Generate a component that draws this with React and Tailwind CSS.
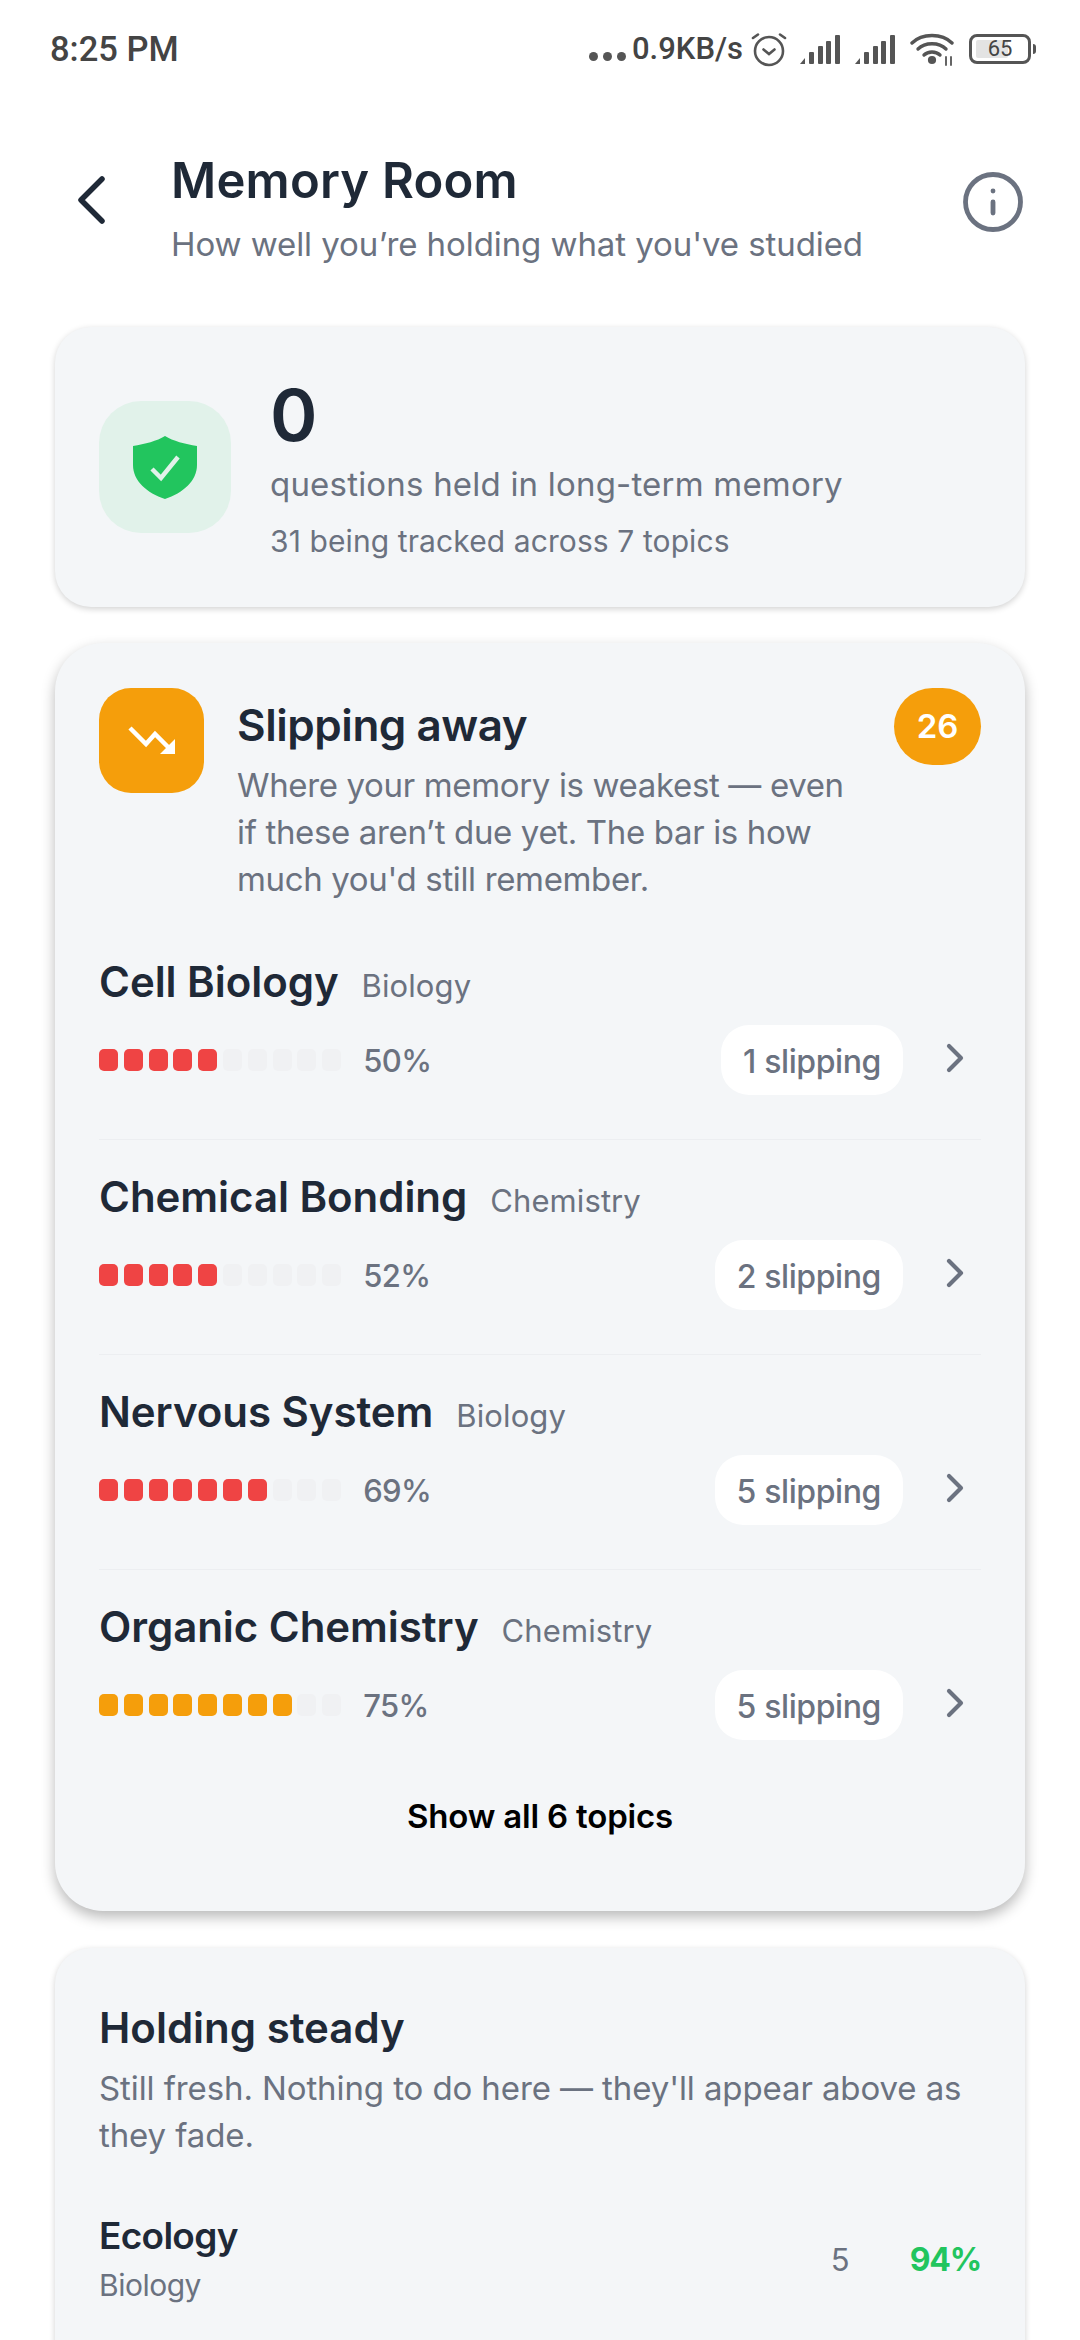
import { Info } from "lucide-react";

const slipping = [
  { title: "Cell Biology", subject: "Biology", pct: 50, filled: 5, color: "bg-[#ef4444]", count: 1 },
  { title: "Chemical Bonding", subject: "Chemistry", pct: 52, filled: 5, color: "bg-[#ef4444]", count: 2 },
  { title: "Nervous System", subject: "Biology", pct: 69, filled: 7, color: "bg-[#ef4444]", count: 5 },
  { title: "Organic Chemistry", subject: "Chemistry", pct: 75, filled: 8, color: "bg-[#f59e0b]", count: 5 },
];

function SignalIcon() {
  return (
    <svg width="40" height="29" viewBox="0 0 40 29" fill="#555">
      <path d="M0 29 L5 23 V29 Z" />
      <rect x="9" y="17" width="5" height="12" rx="1" />
      <rect x="18" y="11" width="5" height="18" rx="1" />
      <rect x="26" y="6" width="5" height="23" rx="1" />
      <rect x="35" y="0" width="5" height="29" rx="1" />
    </svg>
  );
}

function StatusBar() {
  return (
    <div className="flex h-[97px] items-start justify-between pl-[50px] pr-[44px] pt-[31px] font-['Roboto',sans-serif] text-[#444444]">
      <span className="text-[34.5px] font-medium leading-[36px]">8:25 PM</span>
      <div className="flex items-center">
        <div className="mt-[14px] flex gap-[5px]">
          <span className="h-[9px] w-[9px] rounded-full bg-[#555555]" />
          <span className="h-[9px] w-[9px] rounded-full bg-[#555555]" />
          <span className="h-[9px] w-[9px] rounded-full bg-[#555555]" />
        </div>
        <span className="ml-[6px] text-[31px] font-medium leading-[36px]">0.9KB/s</span>
        <svg className="ml-[8px]" width="36" height="35" viewBox="0 0 36 35" fill="none" stroke="#555" strokeWidth="2.6" strokeLinecap="round">
          <circle cx="18" cy="19" r="14" />
          <path d="M12.5 17.5 L18 22 L23.5 17.5" />
          <path d="M2 6 L7 2.5 M34 6 L29 2.5" />
        </svg>
        <div className="ml-[13px]"><SignalIcon /></div>
        <div className="ml-[15px]"><SignalIcon /></div>
        <svg className="ml-[15px]" width="44" height="33" viewBox="0 0 44 33" fill="none" stroke="#555" strokeWidth="3.4" strokeLinecap="round">
          <path d="M2 10 C12 0 32 0 42 10" />
          <path d="M8 16 C15 9 29 9 36 16" />
          <path d="M14 22 C18 18 26 18 30 22" />
          <circle cx="22" cy="27" r="2.4" fill="#555" />
          <path d="M36 24 V32 M41 24 V32" strokeWidth="1.8" />
        </svg>
        <div className="relative ml-[15px] flex h-[30px] w-[62px] items-center justify-center rounded-[8px] border-[3.5px] border-[#555555]">
          <span className="absolute bottom-[3px] left-[4px] top-[3px] w-[32px] rounded-[2px] bg-[#e3e3e3]" />
          <span className="relative text-[22px] leading-none">65</span>
        </div>
        <span className="ml-[2px] h-[10px] w-[3px] rounded-r-full bg-[#555555]" />
      </div>
    </div>
  );
}

function Header() {
  return (
    <div className="flex h-[230px] items-start pt-[51px]">
      <svg className="ml-[76px] mt-[28px]" width="32" height="48" viewBox="0 0 32 48" fill="none" stroke="#1f2937" strokeWidth="5.5" strokeLinecap="round" strokeLinejoin="round">
        <path d="M26 3 L5 24 L26 45" />
      </svg>
      <div className="ml-[63px] flex-1">
        <h1 className="text-[49px] font-semibold leading-[66px] tracking-[0.2px] text-[#1f2937]">Memory Room</h1>
        <p className="mt-[7px] text-[33px] leading-[46px] tracking-[-0.08px] text-[#6b7280]">How well you’re holding what you've studied</p>
      </div>
      <Info className="mr-[54px] mt-[21px] text-[#6b7280]" size={66} strokeWidth={1.75} />
    </div>
  );
}

function TopicRow({ topic, last }) {
  return (
    <div className={last ? "pt-[34px]" : "border-b border-[#eceef1] pb-[44px] pt-[34px]"}>
      <div className="flex h-[46px] items-baseline gap-[23px]">
        <span className="text-[42px] font-semibold leading-[46px] tracking-[-0.05px] text-[#1f2937]">{topic.title}</span>
        <span className="text-[31px] leading-[46px] tracking-[0.1px] text-[#6b7280]">{topic.subject}</span>
      </div>
      <div className="mt-[20px] flex h-[70px] items-center justify-between">
        <div className="flex items-center">
          <div className="flex gap-[5.8px]">
            {Array.from({ length: 10 }).map((_, i) => (
              <span key={i} className={`h-[22px] w-[19px] rounded-[5px] ${i < topic.filled ? topic.color : "bg-[#f0f1f3]"}`} />
            ))}
          </div>
          <span className="ml-[22px] mt-[3px] text-[31px] font-medium tracking-[-0.6px] text-[#6b7280]">{topic.pct}%</span>
        </div>
        <div className="flex items-center">
          <span className="flex h-[70px] items-center rounded-[28px] bg-white px-[22px] pt-[4px] text-[32px] font-medium tracking-[-0.4px] text-[#6b7280]">{topic.count} slipping</span>
          <svg className="ml-[43px] mr-[17px] -mt-[4px]" width="18" height="30" viewBox="0 0 18 30" fill="none" stroke="#6b7280" strokeWidth="4.2" strokeLinecap="round" strokeLinejoin="round">
            <path d="M3 3 L15 15 L3 27" />
          </svg>
        </div>
      </div>
    </div>
  );
}

export default function App() {
  return (
    <div className="h-[2340px] w-[1080px] overflow-hidden bg-white font-['Inter',sans-serif]">
      <StatusBar />
      <Header />

      {/* Summary */}
      <div className="mx-[55px] flex h-[280px] items-center rounded-[36px] bg-[#f4f6f8] pl-[44px] shadow-[0_2px_6px_rgba(0,0,0,0.18)]">
        <div className="flex h-[132px] w-[132px] shrink-0 items-center justify-center rounded-[42px] bg-[#e1f2ea]">
          <svg width="64" height="64" viewBox="0 0 64 64">
            <path d="M32 1 C40 6 52 9 64 11 L64 30 C64 46 50 58 32 64 C14 58 0 46 0 30 L0 11 C12 9 24 6 32 1 Z" fill="#22c55e" />
            <path d="M19 34 L28 43 L45 22" fill="none" stroke="#e1f2ea" strokeWidth="4.5" />
          </svg>
        </div>
        <div className="ml-[39px] mt-[8px]">
          <div className="-mt-[6px] text-[72px] font-semibold leading-[78px] text-[#1f2937]">0</div>
          <p className="mt-[8px] text-[33px] leading-[44px] tracking-[0.2px] text-[#6b7280]">questions held in long-term memory</p>
          <p className="mt-[15px] text-[30px] leading-[40px] tracking-[0.1px] text-[#6b7280]">31 being tracked across 7 topics</p>
        </div>
      </div>

      {/* Slipping away */}
      <div className="mx-[55px] mt-[36px] h-[1268px] rounded-[48px] bg-[#f4f6f8] px-[44px] pt-[45px] shadow-[0_6px_14px_rgba(0,0,0,0.28)]">
        <div className="flex items-start">
          <div className="flex h-[105px] w-[105px] shrink-0 items-center justify-center rounded-[32px] bg-[#f59e0b]">
            <svg width="48" height="30" viewBox="0 0 48 30" fill="none">
              <path d="M2 2 L18 18 L27 8 L42 23" stroke="white" strokeWidth="4.5" />
              <path d="M47 28 L47 13 L32 28 Z" fill="white" />
            </svg>
          </div>
          <div className="ml-[33px] flex-1">
            <h2 className="mt-[12px] text-[44px] font-semibold leading-[50px] tracking-[-0.45px] text-[#1f2937]">Slipping away</h2>
            <p className="mt-[12px] w-[625px] text-[33px] leading-[47px] tracking-[-0.35px] text-[#6b7280]">
              Where your memory is weakest — even if these aren’t due yet. The bar is how much you'd still remember.
            </p>
          </div>
          <span className="flex h-[77px] w-[87px] shrink-0 items-center justify-center rounded-full bg-[#f59e0b] text-[33px] font-semibold text-white">26</span>
        </div>

        <div className="mt-[22px]">
          {slipping.map((t, i) => (
            <TopicRow key={t.title} topic={t} last={i === slipping.length - 1} />
          ))}
        </div>

        <div className="mt-[53px] text-center text-[33px] font-semibold leading-[46px] tracking-[-0.2px] text-black">Show all 6 topics</div>
      </div>

      {/* Holding steady */}
      <div className="mx-[55px] mt-[37px] h-[500px] rounded-[36px] bg-[#f4f6f8] px-[44px] pt-[53px] shadow-[0_2px_6px_rgba(0,0,0,0.18)]">
        <h2 className="text-[42px] font-semibold leading-[54px] tracking-[0px] text-[#1f2937]">Holding steady</h2>
        <p className="mt-[10px] text-[33px] leading-[47px] tracking-[-0.1px] text-[#6b7280]">
          Still fresh. Nothing to do here — they'll appear above as they fade.
        </p>
        <div className="mt-[54px] flex items-center justify-between">
          <div>
            <div className="text-[37px] font-semibold leading-[46px] tracking-[-0.7px] text-[#1f2937]">Ecology</div>
            <div className="mt-[4px] text-[30px] leading-[44px] tracking-[-0.5px] text-[#6b7280]">Biology</div>
          </div>
          <div className="flex items-center">
            <span className="text-[31px] text-[#6b7280]">5</span>
            <span className="ml-[60px] text-[32px] font-bold tracking-[-1.2px] text-[#22c55e]">94%</span>
          </div>
        </div>
      </div>
    </div>
  );
}
